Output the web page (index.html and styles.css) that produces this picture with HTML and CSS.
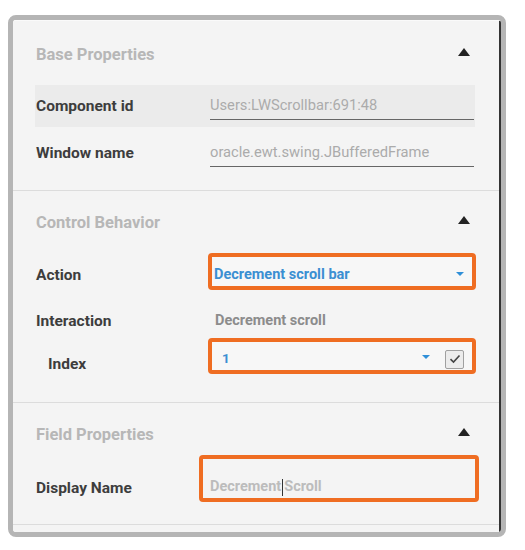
FILE: index.html
```html
<!DOCTYPE html>
<html lang="en">
<head>
    <meta charset="UTF-8">
    <meta name="viewport" content="width=device-width, initial-scale=1.0">
    <title>Properties</title>
    <link rel="stylesheet" href="styles.css">
</head>
<body>
    <div class="frame">
        <div class="panel">

            <div class="section">
                <div class="section-header">
                    <h2>Base Properties</h2>
                    <span class="collapse"></span>
                </div>
                <div class="row shaded">
                    <span class="label">Component id</span>
                    <span class="value underline">Users:LWScrollbar:691:48</span>
                </div>
                <div class="row">
                    <span class="label">Window name</span>
                    <span class="value underline">oracle.ewt.swing.JBufferedFrame</span>
                </div>
            </div>

            <div class="section behavior">
                <div class="section-header">
                    <h2>Control Behavior</h2>
                    <span class="collapse"></span>
                </div>
                <div class="row action-row">
                    <span class="label">Action</span>
                    <div class="highlight select">
                        <span class="select-text">Decrement scroll bar</span>
                        <span class="chevron"></span>
                    </div>
                </div>
                <div class="row interaction-row">
                    <span class="label">Interaction</span>
                    <span class="plain">Decrement scroll</span>
                </div>
                <div class="row index-row">
                    <span class="label sub">Index</span>
                    <div class="highlight select">
                        <span class="select-text index-text">1</span>
                        <span class="chevron"></span>
                        <span class="checkbox">
                            <svg width="12" height="10" viewBox="0 0 12 10"><path d="M1.5 5.2 L4.5 8 L10.5 1.5" fill="none" stroke="#444" stroke-width="1.6"/></svg>
                        </span>
                    </div>
                </div>
            </div>

            <div class="section fields">
                <div class="section-header">
                    <h2>Field Properties</h2>
                    <span class="collapse"></span>
                </div>
                <div class="row display-row">
                    <span class="label">Display Name</span>
                    <div class="highlight textbox">
                        <span class="faded">Decrement</span><span class="caret"></span><span class="faded">Scroll</span>
                    </div>
                </div>
            </div>

        </div>
    </div>
</body>
</html>
```

FILE: styles.css
```css
body {
    margin: 0;
    background-color: #ffffff;
    font-family: Roboto, "Liberation Sans", sans-serif;
}
.frame {
    margin: 15px 0 0 8px;
    width: 488px;
    height: 512px;
    border: 5px solid #b5b5b5;
    border-radius: 8px;
    overflow: hidden;
}
.panel {
    height: 100%;
    background-color: #f4f4f4;
    border-right: 2px solid #333;
    border-top: 1px solid #fafafa;
    box-sizing: border-box;
}
.section {
    padding: 14px 24px 16px 22px;
    border-bottom: 1px solid #dcdcdc;
}
.section-header {
    height: 38px;
    display: flex;
    align-items: center;
    justify-content: space-between;
    padding-left: 1px;
    margin-bottom: 12px;
}
.section-header h2 {
    margin: 0;
    font-size: 16.5px;
    font-weight: 700;
    color: #b7b7b7;
}
.collapse {
    width: 0;
    height: 0;
    border-left: 6px solid transparent;
    border-right: 6px solid transparent;
    border-bottom: 8px solid #222;
    margin-right: 5px;
    margin-top: -4px;
}
.row {
    display: flex;
    align-items: center;
    height: 42px;
}
.row + .row {
    margin-top: 5px;
}
.shaded {
    background-color: #ebebeb;
}
.label {
    width: 174px;
    flex: none;
    padding-left: 1px;
    font-size: 15.5px;
    line-height: 18px;
    font-weight: 700;
    color: #3d3d3d;
}
.label.sub {
    padding-left: 13px;
    width: 162px;
}
.value {
    flex: 1;
    font-size: 14.7px;
    color: #ababab;
}
.underline {
    align-self: stretch;
    display: flex;
    align-items: center;
    border-bottom: 1px solid #666;
    margin-bottom: 7px;
    padding-top: 6px;
    margin-right: 1px;
}
.highlight {
    flex: none;
    border: 4px solid #ef6d22;
    border-radius: 4px;
    box-sizing: border-box;
    display: flex;
    align-items: center;
}
.select {
    width: 268px;
    height: 37px;
    margin-left: -2px;
    margin-right: -3px;
    padding: 6px 8px 0 2px;
    background-color: #f7f7f7;
}
.select-text {
    flex: 1;
    font-size: 14.5px;
    font-weight: 700;
    color: #3b8fd2;
}
.index-text {
    padding-left: 8px;
    font-size: 13.5px;
}
.chevron {
    width: 0;
    height: 0;
    border-left: 4px solid transparent;
    border-right: 4px solid transparent;
    border-top: 4px solid #2f8fd8;
    margin-top: -2px;
}
.checkbox {
    width: 17px;
    height: 17px;
    margin-left: 15px;
    border: 1px solid #a0a0a0;
    border-radius: 2px;
    background-color: #ececec;
    display: flex;
    align-items: center;
    justify-content: center;
}

/* control behavior section */
.behavior {
    padding-top: 12px;
    padding-bottom: 28px;
}
.behavior .row + .row {
    margin-top: 0;
}
.action-row {
    height: 37px;
}
.action-row .label {
    padding-top: 6px;
}
.interaction-row {
    height: 48px;
    align-items: flex-end;
    padding-bottom: 8px;
    box-sizing: border-box;
}
.interaction-row .plain {
    font-size: 14.5px;
    line-height: 18px;
    font-weight: 700;
    color: #8c8c8c;
    padding-left: 5px;
}
.index-row {
    height: 36px;
    align-items: flex-start;
}
.index-row .label {
    margin-top: 17px;
}
.index-row .select {
    height: 36px;
    padding-top: 4px;
}
.index-row .checkbox {
    margin-top: 2px;
}

/* field properties section */
.fields {
    padding-top: 12px;
    padding-bottom: 22px;
}
.fields .section-header {
    margin-bottom: 2px;
}
.display-row {
    height: 47px;
    align-items: flex-start;
}
.display-row .label {
    margin-top: 24px;
}
.textbox {
    width: 280px;
    height: 47px;
    margin-left: -11px;
    margin-right: -7px;
    padding: 0 0 2px 7px;
    align-items: flex-end;
    font-size: 14.5px;
    line-height: 18px;
    font-weight: 700;
}
.faded {
    color: #bcbcbc;
}
.caret {
    width: 1px;
    height: 17px;
    background-color: #333;
    margin: 0 1px 0 1px;
}
```
